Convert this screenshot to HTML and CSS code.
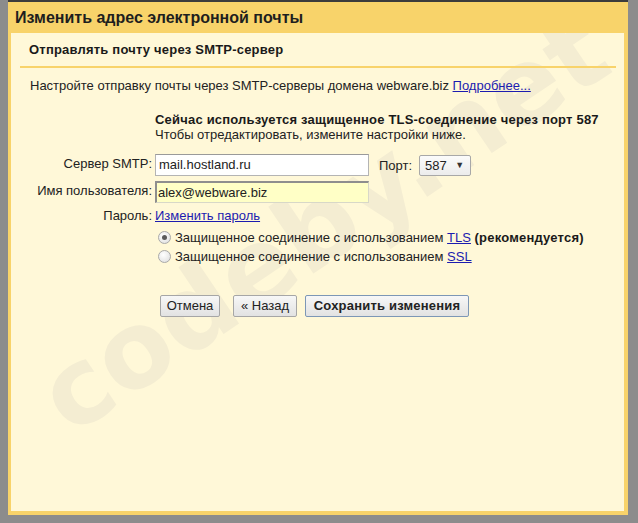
FILE: index.html
```html
<!DOCTYPE html>
<html lang="ru">
<head>
<meta charset="utf-8">
<title>Изменить адрес электронной почты</title>
<link rel="stylesheet" href="styles.css">
</head>
<body>
<div class="dialog">
  <div class="titlebar">Изменить адрес электронной почты</div>
  <div class="panel">
    <div class="watermark">codeby.net</div>
    <div class="content">
      <div class="section-title">Отправлять почту через SMTP-сервер</div>
      <p class="intro">Настройте отправку почты через SMTP-серверы домена webware.biz <a href="#" class="link">Подробнее...</a></p>
      <div class="form">
        <div class="status">
          <div class="status-main">Сейчас используется защищенное TLS-соединение через порт 587</div>
          <div>Чтобы отредактировать, измените настройки ниже.</div>
        </div>

        <div class="label label-field">Сервер SMTP:</div>
        <div class="ctrl">
          <span class="input">mail.hostland.ru</span>
          <span class="port-label">Порт:</span>
          <span class="select">587<span class="arrow">▼</span></span>
        </div>

        <div class="label label-field">Имя пользователя:</div>
        <div class="ctrl">
          <span class="input input-user">alex@webware.biz</span>
        </div>

        <div class="label">Пароль:</div>
        <div class="ctrl ctrl-text"><a href="#" class="link">Изменить пароль</a></div>

        <div class="radios">
          <div class="radio-row"><span class="radio checked"></span><span>Защищенное соединение с использованием <a href="#" class="link">TLS</a> <b>(рекомендуется)</b></span></div>
          <div class="radio-row"><span class="radio"></span><span>Защищенное соединение с использованием <a href="#" class="link">SSL</a></span></div>
        </div>

        <div class="buttons">
          <span class="btn btn-cancel">Отмена</span>
          <span class="btn btn-back">« Назад</span>
          <span class="btn btn-save">Сохранить изменения</span>
        </div>
      </div>
    </div>
  </div>
</div>
</body>
</html>
```
FILE: styles.css
```css
html, body {
  margin: 0;
  padding: 0;
}
body {
  background: #8c8c8c;
  font-family: "Liberation Sans", Arial, sans-serif;
  font-size: 13px;
  color: #222;
  width: 638px;
  height: 523px;
  overflow: hidden;
}
.dialog {
  margin-left: 8px;
  width: 620px;
  border-top: 2px solid #3c3c3c;
  background: #f8d36a;
}
.titlebar {
  height: 31px;
  line-height: 32px;
  padding-left: 7px;
  font-size: 16px;
  font-weight: bold;
  color: #1e1e1e;
}
.panel {
  position: relative;
  margin: 0 4px 0 3px;
  height: 478px;
  background: #fff8d8;
  border-bottom: 4px solid #f8d36a;
  overflow: hidden;
}
.watermark {
  position: absolute;
  left: 312px;
  top: 190px;
  transform: translate(-50%, -50%) rotate(-34deg);
  font-family: "DejaVu Sans", sans-serif;
  font-weight: bold;
  font-size: 106px;
  color: #f4edd2;
  white-space: nowrap;
  z-index: 0;
}
.content {
  position: relative;
  z-index: 1;
  padding: 0 8px 0 9px;
}
.section-title {
  padding: 9px 9px 8px;
  line-height: 16px;
  font-weight: bold;
  letter-spacing: 0.2px;
  color: #1a1a1a;
  border-bottom: 2px solid #f8d36a;
}
.intro {
  margin: 10px 0 0 10px;
  line-height: 16px;
}
.link {
  color: #1c1cb0;
  text-decoration: underline;
}
.form {
  display: grid;
  grid-template-columns: 132px 1fr;
  column-gap: 3px;
  margin-top: 18px;
}
.status {
  grid-column: 2;
  line-height: 15px;
  margin-bottom: 12px;
}
.status-main {
  font-weight: bold;
  letter-spacing: 0.2px;
  color: #1a1a1a;
}
.label {
  text-align: right;
  line-height: 16px;
}
.label-field {
  padding-top: 2px;
}
.ctrl {
  display: flex;
  align-items: center;
  margin-bottom: 5px;
}
.ctrl-text {
  line-height: 16px;
  align-items: flex-start;
  margin-bottom: 4px;
}
.input {
  box-sizing: border-box;
  width: 214px;
  height: 22px;
  line-height: 20px;
  padding-left: 3px;
  background: #fff;
  border: 1px solid #b4b4b4;
  border-top-color: #9a9a9a;
  color: #222;
}
.input-user {
  background: #ffffc6;
  border: 1px solid #d8d8c8;
  border-top: 2px solid #8e8e8e;
  border-left: 2px solid #8e8e8e;
  padding-left: 1px;
  line-height: 19px;
}
.port-label {
  margin-left: 10px;
}
.select {
  box-sizing: border-box;
  display: inline-flex;
  align-items: center;
  justify-content: space-between;
  width: 52px;
  height: 21px;
  margin-left: 7px;
  padding: 0 6px 0 5px;
  background: linear-gradient(#fbfbfb, #ececec);
  border: 1px solid #a8a8a8;
  border-radius: 2px;
}
.arrow {
  font-size: 9px;
  color: #333;
}
.radios {
  grid-column: 2;
  padding-left: 3px;
}
.radio-row {
  display: flex;
  align-items: center;
  height: 19px;
  white-space: nowrap;
}
.radio-row b {
  color: #1a1a1a;
  letter-spacing: 0.2px;
}
.radio {
  box-sizing: border-box;
  flex: none;
  width: 13px;
  height: 13px;
  margin-right: 4px;
  border-radius: 50%;
  border: 1px solid #a9a9a9;
  background: radial-gradient(circle at 40% 35%, #ffffff, #dcdcdc);
  position: relative;
}
.radio.checked::after {
  content: "";
  position: absolute;
  left: 3px;
  top: 3px;
  width: 5px;
  height: 5px;
  border-radius: 50%;
  background: #5a5a5a;
}
.buttons {
  grid-column: 2;
  display: flex;
  gap: 8px;
  margin-top: 29px;
  padding-left: 5px;
}
.btn {
  box-sizing: border-box;
  height: 22px;
  line-height: 20px;
  text-align: center;
  background: linear-gradient(#f7f7f7, #e2e2e2);
  border: 1px solid #a6a6a6;
  border-radius: 2px;
  color: #222;
}
.btn-cancel {
  width: 60px;
  margin-right: 5px;
}
.btn-back {
  width: 64px;
}
.btn-save {
  width: 164px;
  font-weight: bold;
  letter-spacing: 0.2px;
  border-color: #7d97b6;
}
```
